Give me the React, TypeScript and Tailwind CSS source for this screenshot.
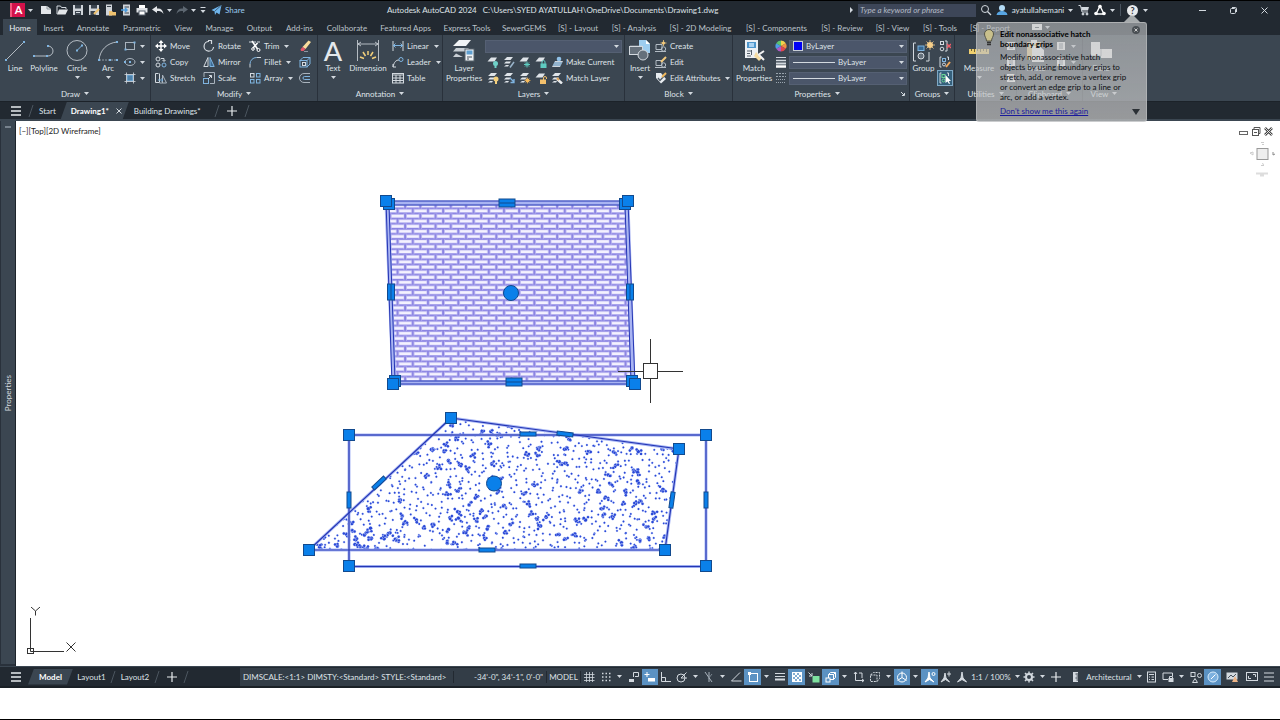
import { ReactNode } from 'react'

/* ---------- shared bits ---------- */

const LIGHT = '#d3d9df'
const BLUE = '#7fb4e0'

function Svg({ w = 12, h = 12, children }: { w?: number; h?: number; children: ReactNode }) {
    return (
        <svg width={w} height={h} viewBox={`0 0 ${w} ${h}`} fill="none" stroke={LIGHT} strokeWidth="1" className="shrink-0" aria-hidden="true">
            {children}
        </svg>
    )
}

function Caret() {
    return (
        <svg width="5" height="3" viewBox="0 0 5 3" className="shrink-0" aria-hidden="true">
            <path d="M0 0H5L2.5 3Z" fill="#d3d9df" />
        </svg>
    )
}

/* ---------- ribbon icons ---------- */

const dot = (x: number, y: number, c = BLUE) => <rect x={x - 1} y={y - 1} width="2" height="2" fill={c} stroke="none" />

const LineIcon = () => <Svg w={24} h={25}><path d="M3 22L21 4" strokeWidth="0.800" />{dot(3, 22)}{dot(21, 4)}</Svg>
const PolylineIcon = () => <Svg w={24} h={25}><path d="M2 18H16A5 5 0 0 0 16 8" strokeWidth="0.800" />{dot(2, 18)}{dot(15, 18)}{dot(16, 8)}</Svg>
const CircleIcon = () => <Svg w={24} h={25}><circle cx="12" cy="12.5" r="10" strokeWidth="0.800" /><path d="M12 12.500L17 7.500" stroke={BLUE} />{dot(12, 12.5)}{dot(17, 7.5)}</Svg>
const ArcIcon = () => <Svg w={24} h={25}><path d="M3 22C4 12 11 5 21 4" strokeWidth="0.800" /><path d="M3 22H21" stroke="#8d98a3" strokeDasharray="2 1" />{dot(3, 22)}{dot(21, 4)}{dot(21, 22)}{dot(14, 22)}</Svg>
const RectIcon = () => <Svg><rect x="1.500" y="2.500" width="9" height="7" stroke="#a9b3bd" />{dot(1.5, 9.5)}{dot(10.5, 2.5)}</Svg>
const EllipseIcon = () => <Svg><ellipse cx="6" cy="6" rx="5" ry="3.500" stroke="#a9b3bd" />{dot(6, 6)}{dot(1, 6)}</Svg>
const HatchIcon = () => (
    <Svg>
        <rect x="3" y="3" width="6" height="6" fill="#4d83ad" stroke={BLUE} />
        <path d="M0.500 2.500H11.500M0.500 9.500H11.500M2.500 0.500V11.500M9.500 0.500V11.500" strokeWidth="0.800" />
    </Svg>
)
const MoveIcon = () => (
    <Svg>
        <path d="M6 1V11M1 6H11" strokeWidth="1.500" stroke="#fff" />
        <path d="M6 0L8.500 3H3.500ZM6 12L8.500 9H3.500ZM0 6L3 3.500V8.500ZM12 6L9 3.500V8.500Z" fill="#fff" stroke="none" />
    </Svg>
)
const CopyIcon = () => (
    <Svg><circle cx="3" cy="3" r="2" /><circle cx="3" cy="9" r="2" /><path d="M6 2.500H9V5M7.500 4L9 5.500L10.500 4" /><circle cx="9" cy="9" r="2" stroke={BLUE} /></Svg>
)
const StretchIcon = () => (
    <Svg><path d="M3.500 1.500H0.500V10.500H4.500V1.500" /><path d="M4.500 11H11.500L7.500 3V11" stroke="#a9b3bd" /><path d="M3 8H8M6.500 6.500L8 8L6.500 9.500" stroke={BLUE} /></Svg>
)
const RotateIcon = () => <Svg><path d="M6 1.500A4.800 4.800 0 1 0 10.600 7" strokeWidth="1.200" /><path d="M5 0.500H8.500V4" strokeWidth="1.200" /></Svg>
const MirrorIcon = () => <Svg><path d="M5 1.500V10.500H0.800Z" /><path d="M7 1.500V10.500H11.200Z" stroke={BLUE} fill="#3c6a92" /></Svg>
const ScaleIcon = () => <Svg><path d="M1 5V0.500H11.500V11.500H7" stroke="#a9b3bd" /><rect x="0.500" y="6.500" width="5" height="5" stroke={BLUE} /><path d="M5 7L8.500 3.500M6 3.500H8.500V6" /></Svg>
const TrimIcon = () => <Svg><path d="M0 2H12" strokeDasharray="3 1" /><path d="M3 1L8.500 9M8.500 3L4 8" stroke="#fff" strokeWidth="1.600" /><circle cx="9.500" cy="10" r="1.500" stroke="#fff" /><circle cx="4" cy="9" r="1.300" stroke="#fff" /></Svg>
const FilletIcon = () => <Svg><path d="M1 11.500V8M7.500 1.500H12" /><path d="M1 8A6.500 6.500 0 0 1 7.500 1.500" stroke={BLUE} /></Svg>
const ArrayIcon = () => (
    <Svg><rect x="1.500" y="1.500" width="3.500" height="3.500" /><rect x="7.500" y="1.500" width="3.500" height="3.500" stroke={BLUE} /><rect x="1.500" y="7.500" width="3.500" height="3.500" stroke={BLUE} /><rect x="7.500" y="7.500" width="3.500" height="3.500" stroke={BLUE} /></Svg>
)
const EraseIcon = () => <Svg><path d="M9.500 0.500L12 2L6.500 9L3.500 7Z" fill="#f8dc9c" stroke="none" /><path d="M3.500 7L6.500 9L4.500 11H2L1.500 9.500Z" fill="#e4586a" stroke="none" /><path d="M5 11.500H9" stroke="#8d98a3" /></Svg>
const ExplodeIcon = () => <Svg><rect x="1" y="4.500" width="7" height="6.500" stroke={BLUE} /><path d="M1 4.500L4 1.500H11V8L8 11M8 4.500L11 1.500" stroke={BLUE} /><rect x="3.500" y="6.500" width="3" height="3" /></Svg>
const OffsetIcon = () => <Svg><path d="M11 1.500H5A4.500 4.500 0 0 0 5 10.500H11" stroke="#a9b3bd" /><path d="M11 4.500H5.500A1.500 1.500 0 0 0 5.500 7.500H11" stroke={BLUE} /></Svg>

const TextIcon = () => <span className="text-[27px] leading-[25px] font-medium text-[#e4e8ec]" aria-hidden="true">A</span>
const DimensionIcon = () => (
    <Svg w={24} h={25}>
        <path d="M1.500 2V23M22.500 2V23M2 6H22M5 4L2 6L5 8M19 4L22 6L19 8" strokeWidth="0.800" />
        <path d="M12 13V17M7 14L9.500 18M17 14L14.500 18M4 19L8 20.500M20 19L16 20.500" stroke="#f2cf7a" strokeWidth="1.500" />
    </Svg>
)
const LinearIcon = () => <Svg><path d="M1 1V11M11 1V11" /><path d="M1 5.500H11M3.500 3.500L1.500 5.500L3.500 7.500M8.500 3.500L10.500 5.500L8.500 7.500" stroke={BLUE} /></Svg>
const LeaderIcon = () => <Svg><path d="M1 11C2 6 4 4 7 4M1 8V11H4" /><circle cx="9" cy="3.500" r="2" stroke={BLUE} /></Svg>
const TableIcon = () => <Svg><rect x="0.500" y="1.500" width="11" height="9.500" /><path d="M0.500 3H11.500M0.500 6H11.500M0.500 8.500H11.500M4 3V11M8 3V11" /></Svg>

const LayerPropsIcon = () => (
    <Svg w={24} h={25}>
        <path d="M7 2H19L14 8H1Z" fill="#f1f3f5" stroke="none" />
        <path d="M4 10L1 13.500H14L17 10M4 15.500L1 19H11" fill="#c8ced4" stroke="none" />
        <rect x="13" y="11" width="9" height="12" fill="#eef1f4" stroke="#56626d" />
        <rect x="14.500" y="12.500" width="6" height="4" fill="#5f9fd0" stroke="none" />
        <path d="M15 19H20M15 21H17" stroke="#46515c" />
    </Svg>
)
const stack = <path d="M4 1H10L7.500 4H1ZM3 5.500H8L6.500 7.500H1ZM3 9H6L5 10.500H1Z" fill="#dfe4e9" stroke="none" />
const single = <path d="M4 1.500H10L7.500 5.500H0.500Z" fill="#dfe4e9" stroke="none" />
const LayerOffIcon = () => <Svg>{single}<circle cx="8.500" cy="7.500" r="2.500" fill="#6fd0c8" stroke="none" /><path d="M8.500 9V12" stroke="#6fd0c8" strokeWidth="2" /></Svg>
const LayerIsoIcon = () => <Svg>{stack}<path d="M7 11.500L11 6" stroke="#9bb6cc" strokeWidth="1.500" /></Svg>
const LayerFrzIcon = () => <Svg>{single}<path d="M8 5.500V11.500M5 8.500H11M6 6.500L10 10.500M10 6.500L6 10.500" stroke="#5ecbc0" /></Svg>
const LayerLckIcon = () => <Svg>{single}<rect x="5.500" y="7.500" width="6" height="4.500" fill="#5ecbc0" stroke="none" /><path d="M7 8V6A1.500 1.500 0 0 1 10 6V8" stroke="#5ecbc0" /></Svg>
const MakeCurIcon = () => <Svg><path d="M4 5H12L9 11H1Z" fill="#cfd6dd" stroke="none" /><path d="M3 7H11M2 9H10" stroke="#5790bd" /><circle cx="8" cy="3" r="2.300" fill="#8fc1e8" stroke="none" /></Svg>
const LayerOnIcon = () => <Svg>{stack}<circle cx="9" cy="7" r="2.500" fill="#f3cf7c" stroke="none" /><path d="M9 9V12" stroke="#f3cf7c" strokeWidth="2" /></Svg>
const LayerUnisoIcon = () => <Svg>{stack}<path d="M7 6L11 10M11 7V10.500H7.500" stroke={BLUE} strokeWidth="1.300" /></Svg>
const LayerThawIcon = () => <Svg>{stack}<circle cx="8.500" cy="8.500" r="2" fill="#f3b95c" stroke="none" /><path d="M8.500 5.500V11.500M5.500 8.500H11.500M6.500 6.500L10.500 10.500M10.500 6.500L6.500 10.500" stroke="#f3b95c" strokeWidth="0.700" /></Svg>
const LayerUnlckIcon = () => <Svg>{single}<rect x="5" y="7.500" width="6" height="4.500" fill="#f3c06c" stroke="none" /><path d="M8.500 8V6A1.500 1.500 0 0 1 11.500 6V7" stroke="#f3c06c" /></Svg>
const MatchLayIcon = () => <Svg>{stack}<path d="M6 7L11 11.500" strokeWidth="2.500" stroke="#e9ecef" /><path d="M6 6L8 8" stroke="#e2a75c" strokeWidth="2" /></Svg>

const InsertIcon = () => (
    <Svg w={24} h={25}>
        <path d="M11 2H18L22 6V15H11Z" fill="#9dcdf0" stroke="none" /><path d="M18 2V6H22" fill="#fff" stroke="none" />
        <rect x="1.500" y="8.500" width="13" height="8" fill="#65707b" /><circle cx="15" cy="17" r="5" fill="#65707b" /><path d="M2 8H14" strokeWidth="0.500" />
    </Svg>
)
const CreateIcon = () => <Svg><path d="M1 4.500H7V9.500H1ZM0 11.500H11" stroke="#b3bcc5" /><circle cx="8.500" cy="9" r="2.200" stroke="#b3bcc5" /><circle cx="8.500" cy="3" r="1.600" fill="#f3c97c" stroke="none" /><path d="M8.500 0V6M5.500 3H11.500" stroke="#f3c97c" strokeWidth="0.800" /></Svg>
const EditIcon = () => <Svg><path d="M1 4.500H7V9.500H1ZM0 11.500H11" stroke="#b3bcc5" /><circle cx="8.500" cy="9" r="2.200" stroke="#b3bcc5" /><path d="M6 6L11 1" stroke="#f3c97c" strokeWidth="2" /></Svg>
const AttrIcon = () => <Svg><path d="M1 1H6L11 7L6 11.500L1 6Z" fill="#e8ecf0" stroke="none" /><path d="M3 6L5 8.500L11 2" stroke="#4c5763" strokeWidth="1.300" /><path d="M7 5L11 1" stroke="#f3b95c" strokeWidth="2" /></Svg>

const MatchPropIcon = () => (
    <Svg w={24} h={25}>
        <rect x="3" y="2" width="13" height="18" fill="#eef1f4" stroke="none" /><rect x="5" y="4" width="9" height="6" fill="#4f97cc" stroke="none" /><rect x="7" y="5" width="5" height="4" fill="#a9d2f2" stroke="none" />
        <path d="M5 13H10M5 15.500H8M5 18H9M9.500 12V17" stroke="#56616c" />
        <path d="M14 14L20 20L17 23L12 18Z" fill="#f6dca2" stroke="none" /><path d="M16 17L22 13M17 17L22 22" stroke="#f1f1f1" strokeWidth="2" />
    </Svg>
)
const ColorWheelIcon = () => (
    <Svg>
        <g stroke="none">
            <path d="M6 6L6 0.500A5.500 5.500 0 0 1 10.800 3.200Z" fill="#f1d44b" /><path d="M6 6L10.800 3.200A5.500 5.500 0 0 1 10.800 8.800Z" fill="#f09343" />
            <path d="M6 6L10.800 8.800A5.500 5.500 0 0 1 6 11.500Z" fill="#e0484f" /><path d="M6 6L6 11.500A5.500 5.500 0 0 1 1.200 8.800Z" fill="#b05ac4" />
            <path d="M6 6L1.200 8.800A5.500 5.500 0 0 1 1.200 3.200Z" fill="#4f9de6" /><path d="M6 6L1.200 3.200A5.500 5.500 0 0 1 6 0.500Z" fill="#5cc46f" />
        </g>
    </Svg>
)
const LweightIcon = () => <Svg><path d="M1 1.500H11" /><path d="M1 4.500H11" strokeWidth="1.500" /><path d="M1 7.500H11" strokeWidth="2" /><path d="M1 10.500H11" strokeWidth="2.500" stroke="#fff" /></Svg>
const LtypeIcon = () => <Svg><path d="M1 1.500H11M1 4.500H11" strokeDasharray="2 1" stroke="#9aa5af" /><path d="M1 7.500H11M1 10.500H11" strokeDasharray="1 1" stroke="#9aa5af" /></Svg>

const GroupIcon = () => (
    <Svg w={24} h={25}>
        <path d="M4 5H1.500V23H4M14 23H17V14" /><rect x="6" y="8" width="6" height="4.500" stroke={BLUE} fill="#376a94" /><circle cx="9" cy="18" r="3" fill="#65707b" />
        <circle cx="18" cy="7" r="3" fill="#f6cf8a" stroke="none" /><path d="M18 2V12M13 7H23M14.500 3.500L21.500 10.500M21.500 3.500L14.500 10.500" stroke="#f6cf8a" strokeWidth="0.800" />
    </Svg>
)
const UngroupIcon = () => <Svg><rect x="1.500" y="1.500" width="3" height="3" /><circle cx="3" cy="9" r="1.800" /><path d="M6 1H8V11H6" /><path d="M8 4L12 8M12 4L8 8" stroke="#ee5b67" strokeWidth="1.400" /></Svg>
const GroupEditIcon = () => <Svg><path d="M2.500 1H1V11H2.500M8 1H9.500V4" /><rect x="3.500" y="2.500" width="3" height="3" stroke={BLUE} /><circle cx="5" cy="8.500" r="1.500" /><path d="M7 11L11 6" stroke="#f3a95c" strokeWidth="2" /></Svg>
const GroupSelIcon = () => <Svg><path d="M2.500 1H1V11H2.500M8 1H9.500V4" /><rect x="3" y="2.500" width="3" height="3" stroke="#69d693" /><circle cx="4.500" cy="8.500" r="1.500" stroke="#69d693" /><path d="M6.500 3V11L8.500 9.500L10 12L11 11.500L9.800 9H12Z" fill="#fff" stroke="none" /></Svg>
const MeasureIcon = () => <Svg w={24} h={25}><rect x="2" y="11" width="20" height="5" fill="#f0cf6e" stroke="none" /><path d="M4.500 11V13M7.500 11V14M10.500 11V13M13.500 11V14M16.500 11V13M19.500 11V14" stroke="#6e6335" /></Svg>
const SheetIcon = () => <Svg><rect x="2" y="2" width="8" height="8" fill="#fff" stroke="none" /><path d="M4 4H8M4 6H8M4 8H8" stroke="#6b7682" /></Svg>
const PasteIcon = () => <Svg w={24} h={25}><rect x="3" y="4" width="14" height="18" fill="#e8cd86" stroke="none" /><rect x="7" y="2" width="6" height="4" fill="#fff" stroke="none" /><path d="M8 8H15L20 12V24H8Z" fill="#fff" stroke="none" /></Svg>
const BaseIcon = () => <Svg w={24} h={25}><path d="M2 4H11V11H23V20H12V18H2Z" fill="#fff" stroke="none" /><path d="M2 18H12V11" stroke="#a8b1ba" /></Svg>

/* ---------- ribbon building blocks ---------- */

function Panel({ title, width, launcher, children }: { title: string; width: string; launcher?: boolean; children: ReactNode }) {
    return (
        <section className={`${width} flex h-full shrink-0 flex-col border-r border-[#29313b]`}>
            <div className="flex h-[51px] pt-[3px]">{children}</div>
            <div className="flex h-[15px] items-center">
                <button className="flex flex-1 items-center justify-center gap-1">
                    {title}
                    <Caret />
                </button>
                {launcher && <button aria-label={`${title} settings`} className="mr-1"><Svg w={4} h={4}><path d="M0 0L3 3M3.500 1V3.500H1" /></Svg></button>}
            </div>
        </section>
    )
}

function Big({ icon, label, width, caret }: { icon: ReactNode; label: string; width: string; caret?: boolean }) {
    return (
        <button className={`${width} flex shrink-0 flex-col items-center leading-[10px]`}>
            <span className="flex h-[25px] items-center">{icon}</span>
            <span>{label}</span>
            {caret && <span className="pt-[3px]"><Caret /></span>}
        </button>
    )
}

function Small({ icon, label, caret }: { icon: ReactNode; label: string; caret?: boolean }) {
    return (
        <button className="flex h-4 items-center gap-[3px] whitespace-nowrap">
            {icon}
            {label}
            {caret && <span className="pl-[2px]"><Caret /></span>}
        </button>
    )
}

function IconOnly({ icon, label, caret, active }: { icon: ReactNode; label: string; caret?: boolean; active?: boolean }) {
    return (
        <button aria-label={label} className={`flex h-4 min-w-4 items-center justify-center gap-1 ${active ? 'border border-[#7fa9c6] bg-[#35607c]' : ''}`}>
            {icon}
            {caret && <Caret />}
        </button>
    )
}

function Combo({ label, value, children }: { label: string; value: string; children?: ReactNode }) {
    return (
        <div className="flex h-[13px] flex-1 items-center gap-[3px] border border-[#556073] bg-[#4b566a] pr-[2px] pl-[3px]">
            {children}
            <select aria-label={label} className="h-[11px] min-w-0 flex-1 appearance-none bg-transparent leading-[11px] outline-none">
                <option>{value}</option>
            </select>
            <Caret />
        </div>
    )
}

const ribbonTabs = [
    { name: 'Home', w: 'w-[34px]' },
    { name: 'Insert', w: 'w-[33px]' },
    { name: 'Annotate', w: 'w-[46px]' },
    { name: 'Parametric', w: 'w-[52px]' },
    { name: 'View', w: 'w-[31px]' },
    { name: 'Manage', w: 'w-[41px]' },
    { name: 'Output', w: 'w-[39px]' },
    { name: 'Add-ins', w: 'w-[41px]' },
    { name: 'Collaborate', w: 'w-[54px]' },
    { name: 'Featured Apps', w: 'w-[63px]' },
    { name: 'Express Tools', w: 'w-[60px]' },
    { name: 'SewerGEMS', w: 'w-[54px]' },
    { name: '[S] - Layout', w: 'w-[54px]' },
    { name: '[S] - Analysis', w: 'w-[58px]' },
    { name: '[S] - 2D Modeling', w: 'w-[75px]' },
    { name: '[S] - Components', w: 'w-[77px]' },
    { name: '[S] - Review', w: 'w-[54px]' },
    { name: '[S] - View', w: 'w-[47px]' },
    { name: '[S] - Tools', w: 'w-[48px]' },
    { name: '[S] - Report', w: 'w-[52px]' },
]

/* ---------- title bar ---------- */

const quickTools = [
    { label: 'New', icon: <Svg><path d="M1 2H7L11 5V10H1Z" fill="#e3e6e9" stroke="none" /><path d="M7 2V5H11" stroke="#6b7580" strokeWidth="0.700" /></Svg> },
    { label: 'Open', icon: <Svg><path d="M1 10V2H4.500L5.500 3.500H10V5" /><path d="M3 5.500H12L9.500 10.500H1Z" fill="#e3e6e9" stroke="none" /></Svg> },
    { label: 'Save', icon: <Svg><path d="M1 1H11V11H1Z" fill="#cfd4d9" stroke="none" /><rect x="3" y="1" width="6" height="3.500" fill="#3a434d" stroke="none" /><rect x="3" y="7" width="6" height="4" fill="#3a434d" stroke="none" /><path d="M4 8.500H8" /></Svg> },
    { label: 'Save As', icon: <Svg><path d="M1 1H11V11H1Z" fill="#cfd4d9" stroke="none" /><rect x="3" y="1" width="6" height="3.500" fill="#3a434d" stroke="none" /><rect x="2.500" y="7" width="5" height="4" fill="#3a434d" stroke="none" /><path d="M6 10L11 5" stroke="#efc26f" strokeWidth="2" /></Svg> },
    { label: 'Open from Web', icon: <Svg><rect x="2" y="0.500" width="6" height="11" fill="#cfd4d9" stroke="none" /><path d="M3 2.500H7" stroke="#3a434d" /><path d="M5 7H8L9 8H12V11.500H5Z" fill="#efc26f" stroke="none" /></Svg> },
    { label: 'Save to Web', icon: <Svg><rect x="3" y="0.500" width="7" height="11" fill="#cfd4d9" stroke="none" /><path d="M4.500 3H9M4.500 9H9" stroke="#3a434d" /><path d="M1 6H7M5 4L7 6L5 8" stroke="#4b9bdc" strokeWidth="1.500" /></Svg> },
    { label: 'Plot', icon: <Svg><rect x="3" y="1" width="6" height="3" fill="#fff" stroke="none" /><rect x="0.500" y="4" width="11" height="4.500" fill="#dfe3e7" stroke="none" /><rect x="3" y="7" width="6" height="4" fill="#fff" stroke="#59636e" /></Svg> },
]

function TitleBar() {
    return (
        <header className="flex h-[19px] items-center border-t border-black bg-[#222931]">
            <div className="flex w-[387px] shrink-0 items-center pl-[10px]">
                <button aria-label="Application menu" className="flex items-center gap-[3px]">
                    <span className="flex h-[14px] w-[15px] items-center justify-center border-l-2 border-[#f0567d] bg-[#d3114a] text-[11px] leading-[14px] font-bold text-white">A</span>
                    <Caret />
                </button>
                <div className="ml-[7px] flex gap-1">
                    {quickTools.map(t => <button key={t.label} aria-label={t.label}>{t.icon}</button>)}
                    <button aria-label="Undo" className="flex items-center gap-[3px]">
                        <Svg><path d="M0 5.500L5 2V4.500C9 4 11 6 11.500 10C10 7.500 8 7 5 7V9Z" fill="#e3e6e9" stroke="none" /></Svg>
                        <Caret />
                    </button>
                    <button aria-label="Redo" className="flex items-center gap-[3px]">
                        <Svg><path d="M12 5.500L7 2V4.500C3 4 1 6 0.500 10C2 7.500 4 7 7 7V9Z" fill="#5d6771" stroke="none" /></Svg>
                        <Caret />
                    </button>
                    <button aria-label="Customize toolbar"><Svg w={6} h={12}><path d="M0.500 3.500H5.500" /><path d="M0.500 6H5.500L3 9Z" fill="#d3d9df" stroke="none" /></Svg></button>
                </div>
                <button className="ml-[5px] flex items-center gap-[3px] text-[#9ccbf0]">
                    <Svg w={11}><path d="M0.500 6L10.500 1L8.500 10.500L5.500 8.500L4 11L3.500 7.500Z" fill="#6fb5ec" stroke="none" /><path d="M3.500 7.500L10 1.500" stroke="#222931" strokeWidth="0.600" /></Svg>
                    Share
                </button>
            </div>
            <h1 className="flex flex-1 gap-[6px] whitespace-nowrap">
                <span>Autodesk AutoCAD 2024</span>
                <span>C:\Users\SYED AYATULLAH\OneDrive\Documents\Drawing1.dwg</span>
            </h1>
            <div className="flex shrink-0 items-center">
                <Svg w={4} h={6}><path d="M0 0L3 3L0 6Z" fill="#d3d9df" stroke="none" /></Svg>
                <input aria-label="Search" placeholder="Type a keyword or phrase" className="ml-1 h-[13px] w-[118px] bg-[#3d4658] pl-[2px] italic outline-none placeholder:text-[#b4bbc5]" />
                <button aria-label="Find" className="ml-1"><Svg><circle cx="5" cy="5" r="3.500" /><path d="M7.500 7.500L11 11" strokeWidth="1.300" /></Svg></button>
                <button className="ml-1 flex items-center gap-[3px]">
                    <Svg><circle cx="6" cy="4" r="3" fill="#b4dcf7" stroke="none" /><path d="M0.500 11C1 8 3.500 7 6 7C8.500 7 11 8 11.500 11Z" fill="#58a6e4" stroke="none" /></Svg>
                    <span className="w-[54px]">ayatullahemani</span>
                    <Caret />
                </button>
                <button aria-label="App store" className="ml-[5px]"><Svg><path d="M0.500 1.500H2.500L4 8H10" /><path d="M3 3H11L10 6.500H4Z" fill="#d3d9df" stroke="none" /><circle cx="5" cy="10" r="1" fill="#d3d9df" /><circle cx="9" cy="10" r="1" fill="#d3d9df" /></Svg></button>
                <button aria-label="Autodesk apps" className="ml-1 flex items-center gap-1">
                    <Svg><path d="M6 2L2 10H10Z" strokeWidth="1.400" stroke="#fff" /><circle cx="6" cy="2.500" r="1.800" fill="#fff" stroke="none" /><circle cx="2" cy="9.500" r="1.800" fill="#fff" stroke="none" /><circle cx="10" cy="9.500" r="1.800" fill="#fff" stroke="none" /></Svg>
                    <Caret />
                </button>
                <span className="ml-[5px] h-3 w-px bg-[#4a545f]" />
                <button aria-label="Help" className="ml-[6px] flex items-center gap-[5px]">
                    <span className="flex size-[11px] items-center justify-center rounded-full bg-[#e8eaec] text-[9px] leading-[11px] font-bold text-[#2a323b]">?</span>
                    <Caret />
                </button>
                <div className="ml-[49px] flex gap-5 pr-[10px]">
                    <button aria-label="Minimize"><Svg w={11} h={11}><path d="M2 5.500H9" /></Svg></button>
                    <button aria-label="Restore"><Svg w={11} h={11}><rect x="2.500" y="3.500" width="5" height="5" rx="1" /><path d="M4 2.500H7.500A1 1 0 0 1 8.500 3.500V7" /></Svg></button>
                    <button aria-label="Close"><Svg w={11} h={11}><path d="M2.500 2.500L8.500 8.500M8.500 2.500L2.500 8.500" /></Svg></button>
                </div>
            </div>
        </header>
    )
}

function Ribbon() {
    return (
        <div>
            <nav className="flex h-4 items-stretch bg-[#222931] pl-[3px] text-[#bcc3ca]">
                {ribbonTabs.map((tab, i) => (
                    <button key={tab.name} className={`${tab.w} shrink-0 pt-[2px] text-center whitespace-nowrap ${i === 0 ? 'bg-[#3b4651] text-[#eef1f4]' : ''}`}>
                        {tab.name}
                    </button>
                ))}
                <button aria-label="Ribbon display" className="ml-4 flex items-center gap-[3px]">
                    <Svg w={10} h={8}><rect x="0" y="1" width="10" height="6" fill="#fff" stroke="none" /><path d="M3 4.500H7" stroke="#444e58" /></Svg>
                    <Caret />
                </button>
            </nav>
            <div className="flex h-[66px] bg-[#3b4651]">
                <Panel title="Draw" width="w-[151px]">
                    <Big icon={<LineIcon />} label="Line" width="w-[30px]" />
                    <Big icon={<PolylineIcon />} label="Polyline" width="w-[28px]" />
                    <Big icon={<CircleIcon />} label="Circle" width="w-[38px]" caret />
                    <Big icon={<ArcIcon />} label="Arc" width="w-[24px]" caret />
                    <div className="ml-1">
                        <IconOnly icon={<RectIcon />} label="Rectangle" caret />
                        <IconOnly icon={<EllipseIcon />} label="Ellipse" caret />
                        <IconOnly icon={<HatchIcon />} label="Hatch" caret />
                    </div>
                </Panel>
                <Panel title="Modify" width="w-[167px]">
                    <div className="ml-1 w-[48px]">
                        <Small icon={<MoveIcon />} label="Move" />
                        <Small icon={<CopyIcon />} label="Copy" />
                        <Small icon={<StretchIcon />} label="Stretch" />
                    </div>
                    <div className="w-[46px]">
                        <Small icon={<RotateIcon />} label="Rotate" />
                        <Small icon={<MirrorIcon />} label="Mirror" />
                        <Small icon={<ScaleIcon />} label="Scale" />
                    </div>
                    <div className="w-[48px]">
                        <Small icon={<TrimIcon />} label="Trim" caret />
                        <Small icon={<FilletIcon />} label="Fillet" caret />
                        <Small icon={<ArrayIcon />} label="Array" caret />
                    </div>
                    <div>
                        <IconOnly icon={<EraseIcon />} label="Erase" />
                        <IconOnly icon={<ExplodeIcon />} label="Explode" />
                        <IconOnly icon={<OffsetIcon />} label="Offset" />
                    </div>
                </Panel>
                <Panel title="Annotation" width="w-[125px]">
                    <Big icon={<TextIcon />} label="Text" width="w-[30px]" caret />
                    <Big icon={<DimensionIcon />} label="Dimension" width="w-[40px]" />
                    <div className="ml-1">
                        <Small icon={<LinearIcon />} label="Linear" caret />
                        <Small icon={<LeaderIcon />} label="Leader" caret />
                        <Small icon={<TableIcon />} label="Table" />
                    </div>
                </Panel>
                <Panel title="Layers" width="w-[182px]">
                    <Big icon={<LayerPropsIcon />} label="Layer Properties" width="w-[42px]" />
                    <div className="flex-1">
                        <div className="flex h-4 items-center pr-[2px]"><Combo label="Layer" value="" /></div>
                        <div className="flex">
                            <IconOnly icon={<LayerOffIcon />} label="Off" />
                            <IconOnly icon={<LayerIsoIcon />} label="Isolate" />
                            <IconOnly icon={<LayerFrzIcon />} label="Freeze" />
                            <IconOnly icon={<LayerLckIcon />} label="Lock" />
                            <span className="pl-[2px]"><Small icon={<MakeCurIcon />} label="Make Current" /></span>
                        </div>
                        <div className="flex">
                            <IconOnly icon={<LayerOnIcon />} label="Turn all layers on" />
                            <IconOnly icon={<LayerUnisoIcon />} label="Unisolate" />
                            <IconOnly icon={<LayerThawIcon />} label="Thaw all layers" />
                            <IconOnly icon={<LayerUnlckIcon />} label="Unlock" />
                            <span className="pl-[2px]"><Small icon={<MatchLayIcon />} label="Match Layer" /></span>
                        </div>
                    </div>
                </Panel>
                <Panel title="Block" width="w-[108px]">
                    <Big icon={<InsertIcon />} label="Insert" width="w-[30px]" caret />
                    <div>
                        <Small icon={<CreateIcon />} label="Create" />
                        <Small icon={<EditIcon />} label="Edit" />
                        <Small icon={<AttrIcon />} label="Edit Attributes" caret />
                    </div>
                </Panel>
                <Panel title="Properties" width="w-[177px]" launcher>
                    <Big icon={<MatchPropIcon />} label="Match Properties" width="w-[42px]" />
                    <div className="flex flex-1 flex-col pr-[2px]">
                        <div className="flex h-4 items-center gap-[2px]">
                            <ColorWheelIcon />
                            <Combo label="Object color" value="ByLayer"><span className="size-[10px] border border-[#c9cfd6] bg-[#0000f5]" /></Combo>
                        </div>
                        <div className="flex h-4 items-center gap-[2px]">
                            <LweightIcon />
                            <Combo label="Lineweight" value="ByLayer"><span className="h-px w-[42px] bg-[#d3d9df]" /></Combo>
                        </div>
                        <div className="flex h-4 items-center gap-[2px]">
                            <LtypeIcon />
                            <Combo label="Linetype" value="ByLayer"><span className="h-px w-[42px] bg-[#d3d9df]" /></Combo>
                        </div>
                    </div>
                </Panel>
                <Panel title="Groups" width="w-[45px]">
                    <Big icon={<GroupIcon />} label="Group" width="w-[27px]" />
                    <div>
                        <IconOnly icon={<UngroupIcon />} label="Ungroup" />
                        <IconOnly icon={<GroupEditIcon />} label="Group edit" />
                        <IconOnly icon={<GroupSelIcon />} label="Group selection" active />
                    </div>
                </Panel>
                <Panel title="Utilities" width="w-[62px]">
                    <Big icon={<MeasureIcon />} label="Measure" width="w-[48px]" caret />
                    <div>
                        <IconOnly icon={<SheetIcon />} label="Quick select" />
                        <IconOnly icon={<SheetIcon />} label="Select all" />
                        <IconOnly icon={<SheetIcon />} label="Calculator" />
                    </div>
                </Panel>
                <Panel title="Clipboard" width="w-[66px]">
                    <Big icon={<PasteIcon />} label="Paste" width="w-[38px]" caret />
                    <div>
                        <IconOnly icon={<SheetIcon />} label="Cut" caret />
                        <IconOnly icon={<SheetIcon />} label="Copy clip" caret />
                    </div>
                </Panel>
                <section className="flex w-[42px] shrink-0 flex-col">
                    <div className="h-[51px] pt-[3px]"><Big icon={<BaseIcon />} label="Base" width="w-[36px]" /></div>
                    <button className="flex h-[15px] items-center justify-center gap-1">View<Caret /></button>
                </section>
            </div>
        </div>
    )
}

/* ---------- file and layout tabs ---------- */

const MenuIcon = () => <Svg><path d="M1 2H11M1 6H11M1 10H11" strokeWidth="1.300" stroke="#e8ebee" /></Svg>
const PlusIcon = () => <Svg><path d="M6 1V11M1 6H11" strokeWidth="1.200" stroke="#e8ebee" /></Svg>
const Slash = () => <Svg w={6} h={14}><path d="M1 13L5 1" stroke="#4b555f" /></Svg>

function FileTabs() {
    return (
        <nav className="flex h-[20px] items-center border-t border-b-2 border-t-[#1c2229] border-b-[#3b4651] bg-[#222931] pl-[10px]">
            <button aria-label="File tab menu"><MenuIcon /></button>
            <span className="ml-[6px]"><Slash /></span>
            <button className="ml-[5px]">Start</button>
            <button className="ml-[5px] flex h-full w-[68px] items-center gap-[7px] bg-[#3b4651] pl-[10px] font-bold text-white [clip-path:polygon(6px_0,100%_0,calc(100%-6px)_100%,0_100%)]">
                Drawing1*
                <Svg w={6} h={6}><path d="M0.500 0.500L5.500 5.500M5.500 0.500L0.500 5.500" /></Svg>
            </button>
            <button className="ml-[5px] w-[80px] text-left">Building Drawings*</button>
            <Slash />
            <button aria-label="New drawing" className="ml-[6px]"><PlusIcon /></button>
            <span className="ml-[6px]"><Slash /></span>
        </nav>
    )
}

/* ---------- model space ---------- */

const gravelShape = '451,418 679,449 665,550 309,550'
const hatchShape = '388,204 626,204 632,382 394,382'

function makeGravel() {
    let seed = 7
    const rnd = () => {
        seed = (seed * 16807) % 2147483647
        return seed / 2147483647
    }
    const stones: { x: number; y: number; r: number }[] = []
    for (let y = 418; y < 552; y += 8) {
        for (let x = 308; x < 682; x += 8) {
            const cx = x + rnd() * 8
            const cy = y + rnd() * 8
            stones.push({ x: cx, y: cy, r: 0.9 })
            if (rnd() > 0.45) stones.push({ x: x + rnd() * 8, y: y + rnd() * 8, r: 0.9 })
            // every so often a clump of four around a bigger stone
            if (rnd() > 0.78) {
                stones.push({ x: cx, y: cy, r: 1.7 })
                for (let k = 0; k < 3; k++) {
                    stones.push({ x: cx + (rnd() - 0.5) * 6, y: cy + (rnd() - 0.5) * 6, r: 1.2 })
                }
            }
        }
    }
    return stones
}

const gravel = makeGravel()

const cornerGrips = [
    [389, 204], [625, 204], [395, 381], [632, 381],
    [386, 201], [628, 201], [393, 384], [635, 384],
    [349, 435], [706, 435], [349, 566], [706, 566],
    [451, 418], [679, 449], [665, 550], [309, 550],
]

const edgeGrips = [
    { x: 507, y: 203, w: 16, h: 8, a: 0 },
    { x: 514, y: 382, w: 16, h: 8, a: 0 },
    { x: 391, y: 292, w: 7, h: 16, a: 0 },
    { x: 630, y: 292, w: 7, h: 16, a: 0 },
    { x: 528, y: 434, w: 16, h: 4, a: 0 },
    { x: 528, y: 566, w: 16, h: 4, a: 0 },
    { x: 349, y: 500, w: 4, h: 16, a: 0 },
    { x: 706, y: 500, w: 4, h: 16, a: 0 },
    { x: 565, y: 434, w: 16, h: 4, a: 7 },
    { x: 672, y: 500, w: 4, h: 16, a: 8 },
    { x: 487, y: 550, w: 16, h: 4, a: 0 },
    { x: 379, y: 483, w: 16, h: 4, a: -43 },
]

function ModelDrawing() {
    return (
        <svg className="size-full" role="img" aria-label="Hatched shapes with grips">
            <defs>
                <pattern id="brick" x="386" y="202" width="15.200" height="10.200" patternUnits="userSpaceOnUse">
                    <rect width="15.200" height="10.200" fill="#f4f2ff" />
                    <path d="M0 1.300H15.200M0 6.400H15.200" stroke="#c9c5f6" strokeWidth="2.600" />
                    <path d="M0 1.300H15.200M0 6.400H15.200" stroke="#8a83e2" strokeWidth="1.700" />
                    <path d="M4 1.300V6.400M11.600 6.400V10.200M11.600 0V1.300" stroke="#c9c5f6" strokeWidth="3" />
                    <path d="M4 1.300V6.400M11.600 6.400V10.200M11.600 0V1.300" stroke="#8a83e2" strokeWidth="2" />
                </pattern>
                <clipPath id="gravelClip"><polygon points={gravelShape} /></clipPath>
            </defs>
            <g transform="translate(-16 -121)" fill="none">
                <polygon points={hatchShape} fill="url(#brick)" />
                <polygon points="387,203 627,203 633,383 394,383" stroke="#a9b4f2" strokeWidth="5" />
                <polygon points="386,201 628,201 635,384 392,384" stroke="#2536b4" strokeWidth="1" />
                <polygon points="389,205 625,205 631,381 395,381" stroke="#2536b4" strokeWidth="1" />

                <g clipPath="url(#gravelClip)" fill="#2a48d6" stroke="#bccbfa" strokeWidth="1" paintOrder="stroke">
                    {gravel.map((s, i) => <circle key={i} cx={s.x} cy={s.y} r={s.r} />)}
                </g>
                <g stroke="#a9b8f6" strokeWidth="3"><rect x="349" y="435" width="357" height="131.500" /><polygon points={gravelShape} /></g>
                <g stroke="#2536b4" strokeWidth="1.200"><rect x="349" y="435" width="357" height="131.500" /><polygon points={gravelShape} /></g>

                <g fill="#0a80ea" stroke="#124a8e" strokeWidth="1">
                    {edgeGrips.map((g, i) => (
                        <rect key={i} x={g.x - g.w / 2} y={g.y - g.h / 2} width={g.w} height={g.h} transform={`rotate(${g.a} ${g.x} ${g.y})`} />
                    ))}
                    <path d="M499.500 203H515M506 382H522M391 284.500V300M630 284.500V300" />
                    {cornerGrips.map(([x, y], i) => <rect key={i} x={x - 5.5} y={y - 5.5} width="11" height="11" />)}
                    <circle cx="511" cy="293" r="7.500" />
                    <circle cx="494" cy="483.500" r="7.500" />
                </g>

                <path d="M650.500 339V403M618 371.500H683" stroke="#333" />
                <rect x="643.500" y="363.500" width="14" height="15" fill="#fff" stroke="#333" />
            </g>
        </svg>
    )
}

function Workspace() {
    return (
        <div className="flex min-h-0 flex-1">
            <aside className="flex w-4 shrink-0 flex-col items-center border-r border-l border-r-[#1d242b] border-l-[#29313b] bg-[#3b4651]">
                <div className="mt-[5px] h-[2px] w-[6px] bg-[#77828d]" />
                <span className="mt-auto mb-[253px] rotate-180 leading-[14px] text-[#d3d9df] [writing-mode:vertical-rl]">Properties</span>
                <div className="h-[2px] w-full bg-[#29313b]" />
            </aside>
            <main className="relative min-w-0 flex-1 overflow-hidden bg-white text-[#222]">
                <ModelDrawing />
                <span className="absolute top-1 left-[3px]">[−][Top][2D Wireframe]</span>
                <div className="absolute top-[5px] right-[7px] flex gap-[3px]">
                    <button aria-label="Minimize drawing"><Svg w={10} h={11}><rect x="1.500" y="5.500" width="8" height="3" stroke="#666" /></Svg></button>
                    <button aria-label="Restore drawing"><Svg w={10} h={11}><path d="M3 3V1.500H9V7.500H7.500" stroke="#555" /><rect x="1.500" y="3.500" width="6" height="6" stroke="#555" /><path d="M3 6.500H6" stroke="#555" /></Svg></button>
                    <button aria-label="Close drawing"><Svg w={9} h={11}><path d="M1 2L8 9M8 2L1 9" stroke="#444" strokeWidth="2.500" /><path d="M1 2L8 9M8 2L1 9" stroke="#fff" strokeWidth="0.800" /></Svg></button>
                </div>
                <div className="absolute top-5 right-[5px]">
                    <Svg w={28} h={36}>
                        <rect x="10" y="7.500" width="11" height="11" fill="#eee" stroke="#999" />
                        <path d="M14 1.500H17M15 3.500H17M3 12L6 11V14ZM15 22.500L17 23.500M14 24.500H17" stroke="#ccc" />
                        <path d="M26 11V14L28 13" stroke="#888" />
                        <path d="M9 32.500H21M13 34.500H17" stroke="#ddd" strokeWidth="2" />
                    </Svg>
                </div>
                <div className="absolute bottom-[7px] left-[9px]">
                    <Svg w={56} h={52}>
                        <g stroke="#333">
                            <path d="M5.500 11V44.500H39" /><rect x="2.500" y="41.500" width="6" height="5" />
                            <path d="M6 0L10.500 4L15 0M10.500 4V8.500M41.500 35.500L50.500 44.500M50.500 35.500L41.500 44.500" />
                        </g>
                    </Svg>
                </div>
            </main>
        </div>
    )
}

/* ---------- status bar ---------- */

type Toggle = { label: string; w: string; on?: boolean; caret?: boolean; icon: ReactNode }

const snapToggles: Toggle[] = [
    { label: 'Grid', w: 'w-4', icon: <Svg><path d="M3.500 1V11M6.500 1V11M9.500 1V11M1 3.500H11.500M1 6.500H11.500M1 9.500H11.500" strokeWidth="0.800" /></Svg> },
    { label: 'Snap', w: 'w-[17px]', caret: true, icon: <Svg><path d="M2 2.500H11M2 6H11M2 9.500H11" strokeDasharray="1.500 2" strokeWidth="1.500" /></Svg> },
    { label: 'Infer constraints', w: 'w-[17px]', icon: <Svg><path d="M5.500 6V1.500H10.500V5.500H7" /><path d="M1 8H6V11H1Z" fill="#d3d9df" stroke="none" /></Svg> },
    { label: 'Dynamic input', w: 'w-4', on: true, icon: <Svg><path d="M3 1V6M0.500 3.500H5.500" stroke="#fff" /><rect x="4" y="7" width="7" height="3.500" fill="#fff" stroke="none" /></Svg> },
    { label: 'Ortho', w: 'w-4', icon: <Svg><path d="M1.500 1V10.500H11M1.500 6.500H5.500V10.500" /></Svg> },
    { label: 'Polar tracking', w: 'w-4', caret: true, icon: <Svg><circle cx="5" cy="7" r="4" /><path d="M5 7L10.500 1.500M5 7H11" /></Svg> },
    { label: 'Isometric', w: 'w-4', caret: true, icon: <Svg><path d="M2 1L9 11M6 1V11" stroke="#a9b3bd" /><path d="M9 3L5 8" stroke="#7c8791" /></Svg> },
    { label: 'Tracking', w: 'w-4', icon: <Svg><path d="M10 1.500L1.500 10H11.500" /></Svg> },
    { label: 'Object snap', w: 'w-[17px]', on: true, caret: true, icon: <Svg><rect x="2.500" y="2.500" width="8" height="8" stroke="#fff" /><rect x="1" y="1" width="3" height="3" fill="#fff" stroke="none" /></Svg> },
    { label: 'Lineweight', w: 'w-4', icon: <Svg><path d="M1 2.500H11M1 5.500H11" /><path d="M1 8.500H11" strokeWidth="2" /></Svg> },
    { label: 'Transparency', w: 'w-[17px]', on: true, icon: <Svg><rect x="1" y="1" width="10" height="10" fill="#fff" stroke="none" /><path d="M2 3H10M2 7H10" stroke="#5b92c3" strokeWidth="1.500" strokeDasharray="2 2" /><path d="M4 5H10M4 9H10" stroke="#5b92c3" strokeWidth="1.500" strokeDasharray="2 2" /></Svg> },
    { label: 'Selection cycling', w: 'w-[17px]', icon: <Svg><path d="M0.500 1.500L4 5M4 2V5H1" /><rect x="4.500" y="5" width="7" height="6.500" fill="#7ee2a0" stroke="none" /></Svg> },
    { label: '3D object snap', w: 'w-[17px]', on: true, caret: true, icon: <Svg><path d="M3.500 3.500L5.500 1.500H10.500V6.500L8.500 8.500H3.500ZM3.500 3.500H8.500V8.500M8.500 3.500L10.500 1.500" stroke="#fff" /><rect x="1" y="7" width="4" height="4" fill="#5b92c3" stroke="#fff" /></Svg> },
    { label: 'Dynamic UCS', w: 'w-[17px]', icon: <Svg><path d="M2.500 1V9.500H11M1 3L2.500 1L4 3M9 8L11 9.500L9 11M6 2H9V7" /></Svg> },
    { label: 'Selection filter', w: 'w-4', caret: true, icon: <Svg><path d="M1.500 4L4.500 1.500H10.500V7.500L8 10.500H1.500ZM1.500 4H8V10.500" strokeDasharray="2 1" /></Svg> },
    { label: 'Gizmo', w: 'w-4', on: true, caret: true, icon: <Svg><circle cx="6" cy="6.500" r="4.500" stroke="#fff" /><path d="M6 0.500V6.500L1.500 9.500M6 6.500L10.500 9.500" stroke="#fff" /></Svg> },
    { label: 'Annotation visibility', w: 'w-[17px]', on: true, icon: <Svg><path d="M5 1L6 7L10 11L5.500 8.500L1 11L4 7Z" fill="#fff" stroke="#fff" /><circle cx="9.500" cy="3" r="1.500" stroke="#fff" /></Svg> },
    { label: 'AutoScale', w: 'w-4', icon: <Svg><path d="M5 2L6 7L9.500 11L5.500 8.500L1 11L4 7Z" fill="#d3d9df" stroke="#d3d9df" /><path d="M9 0.500V5.500M7 3H11" /></Svg> },
    { label: 'Annotation scale icon', w: 'w-4', icon: <Svg><path d="M6 1L7 7L10.500 11L6 8.500L1.500 11L5 7Z" fill="#d3d9df" stroke="#d3d9df" /></Svg> },
]

const workspaceToggle: Toggle = {
    label: 'Workspace',
    w: 'w-4',
    caret: true,
    icon: <Svg><circle cx="6" cy="6" r="3" strokeWidth="2" /><path d="M6 0.500V2.500M6 9.500V11.500M0.500 6H2.500M9.500 6H11.500M2 2L3.500 3.500M8.500 8.500L10 10M10 2L8.500 3.500M2 10L3.500 8.500" strokeWidth="1.500" /></Svg>,
}

const endToggles: Toggle[] = [
    { label: 'Quick properties', w: 'w-[17px]', icon: <Svg><rect x="2.500" y="1" width="8" height="10" /><path d="M4 3.500H9M4 6H5M6.500 6H9M4 8.500H5M6.500 8.500H9" /></Svg> },
    { label: 'Lock UI', w: 'w-[17px]', caret: true, icon: <Svg><path d="M6 8.500H1V2H10.500V5" /><rect x="6.500" y="7" width="5" height="4" fill="#d3d9df" stroke="none" /><path d="M7.500 7V5.500H10.500V7" /></Svg> },
    { label: 'Isolate objects', w: 'w-[17px]', icon: <Svg><rect x="1" y="1.500" width="4" height="4" /><circle cx="9.500" cy="4.500" r="2" /><path d="M5 7.500L7.500 11.500H2.500Z" /></Svg> },
    { label: 'Hardware acceleration', w: 'w-[17px]', on: true, icon: <Svg><circle cx="6" cy="6" r="5" stroke="#d9ecfb" fill="#7db1df" /><path d="M4 8L8.500 3.500" stroke="#fff" /></Svg> },
    { label: 'Trusted graphics', w: 'w-[22px]', icon: <Svg><rect x="0.500" y="1.500" width="11" height="7" fill="#d3d9df" stroke="none" /><path d="M2 7L5 4L7 6L10 3" stroke="#48535e" /><path d="M9 5L12 11H6Z" fill="#eeb486" stroke="none" /></Svg> },
    { label: 'Clean screen', w: 'w-[18px]', icon: <Svg><rect x="0.500" y="1.500" width="11" height="8" /><path d="M7 3.500H9.500V6M2.500 5V7.500H5" /></Svg> },
    { label: 'Customization', w: 'w-4', icon: <Svg><path d="M1 2H11M1 6H11M1 10H11" strokeWidth="1.200" /></Svg> },
]

function StatusToggle({ item }: { item: Toggle }) {
    return (
        <>
            <button aria-label={item.label} className={`${item.w} flex h-4 shrink-0 items-center justify-center ${item.on ? 'bg-[#5b92c3]' : ''}`}>
                {item.icon}
            </button>
            {item.caret && <button aria-label={`${item.label} options`} className="flex h-4 w-[11px] shrink-0 items-center justify-center"><Caret /></button>}
        </>
    )
}

function StatusBar() {
    return (
        <footer className="flex h-[22px] items-center border-t border-b-2 border-t-[#3b4651] border-b-[#1a2026] bg-[#222931] pl-[10px] whitespace-nowrap">
            <button aria-label="Layout menu"><MenuIcon /></button>
            <button className="ml-[6px] h-4 w-[45px] bg-[#3b4651] font-bold text-white [clip-path:polygon(6px_0,100%_0,calc(100%-6px)_100%,0_100%)]">Model</button>
            <button className="w-[37px] text-center">Layout1</button>
            <Slash />
            <button className="w-[38px] text-center">Layout2</button>
            <Slash />
            <button aria-label="New layout" className="ml-[6px]"><PlusIcon /></button>
            <span className="ml-[5px]"><Slash /></span>
            <div className="ml-auto flex h-[18px] items-center bg-[#333d47] pr-[3px]">
                <span className="w-[213px] pl-[3px]">DIMSCALE:&lt;1:1&gt; DIMSTY:&lt;Standard&gt; STYLE:&lt;Standard&gt;</span>
                <span className="w-[94px] border-r border-l border-[#222931] pr-[3px] text-right">-34'-0", 34'-1", 0'-0"</span>
                <button className="w-[34px] border-r border-[#222931]">MODEL</button>
                {snapToggles.map(item => <StatusToggle key={item.label} item={item} />)}
                <button className="flex w-[51px] items-center justify-center gap-1">1:1 / 100%<Caret /></button>
                <StatusToggle item={workspaceToggle} />
                <button aria-label="Annotation monitor" className="flex w-4 justify-center"><PlusIcon /></button>
                <button className="ml-[5px] flex w-[73px] items-center gap-1">
                    <Svg><path d="M4 1H9V11H4Z" fill="#d3d9df" stroke="none" /><path d="M6.500 3H9M7.500 5H9M6.500 7H9M7.500 9H9" stroke="#333d47" /></Svg>
                    <span className="flex-1 text-center">Architectural</span>
                    <Caret />
                </button>
                {endToggles.map(item => <StatusToggle key={item.label} item={item} />)}
            </div>
        </footer>
    )
}

/* ---------- help balloon ---------- */

function HelpBalloon() {
    return (
        <div className="absolute top-[14px] right-[133px] w-[171px]">
            <svg width="16" height="8" viewBox="0 0 16 8" className="ml-[148px]" aria-hidden="true"><path d="M8 0L16 8H0Z" fill="#c8cacc" fillOpacity="0.800" /></svg>
            <div className="flex h-[100px] gap-[5px] rounded-[3px] border border-[#c5c8ca]/50 bg-linear-to-b from-[#b8babc]/65 to-[#cacaca]/70 pt-[6px] pr-1 pl-[6px] leading-[10px] text-[#0c0f12]">
                <Svg w={12} h={18}><path d="M3.500 12C3.500 9 1.500 8 1.500 5A4.500 4.500 0 0 1 10.500 5C10.500 8 8.500 9 8.500 12Z" fill="#c9c08c" stroke="#55554a" /><path d="M4 13.500H8M4 15.500H8" stroke="#333" strokeWidth="1.500" /></Svg>
                <div className="flex-1 whitespace-nowrap">
                    <p className="font-bold text-black">Edit nonassociative hatch<br />boundary grips</p>
                    <p className="mt-[3px]">
                        Modify nonassociative hatch<br />objects by using boundary grips to<br />stretch, add, or remove a vertex grip<br />or convert an edge grip to a line or<br />arc, or add a vertex.
                    </p>
                    <a href="#hide" className="mt-[4px] block text-[#1a1a9c] underline">Don't show me this again</a>
                </div>
                <div className="-ml-4 flex flex-col items-center justify-between pb-[6px] pr-[2px]">
                    <button aria-label="Close tip" className="-mt-[3px]"><Svg w={8} h={8}><circle cx="4" cy="4" r="4" fill="#4a4f54" stroke="none" /><path d="M2.500 2.500L5.500 5.500M5.500 2.500L2.500 5.500" stroke="#ccc" /></Svg></button>
                    <button aria-label="Expand tip"><Svg w={8} h={6}><path d="M0 0H8L4 6Z" fill="#2b3035" stroke="none" /></Svg></button>
                </div>
            </div>
        </div>
    )
}

export default function App() {
    return (
        <div className="relative flex h-screen min-h-[480px] flex-col overflow-hidden bg-white font-['Lato','Open_Sans',sans-serif] text-[8px] leading-[12px] text-[#dfe3e8]">
            <TitleBar />
            <Ribbon />
            <FileTabs />
            <Workspace />
            <StatusBar />
            <div className="h-8 shrink-0 border-b border-black bg-white" />
            <HelpBalloon />
        </div>
    )
}
